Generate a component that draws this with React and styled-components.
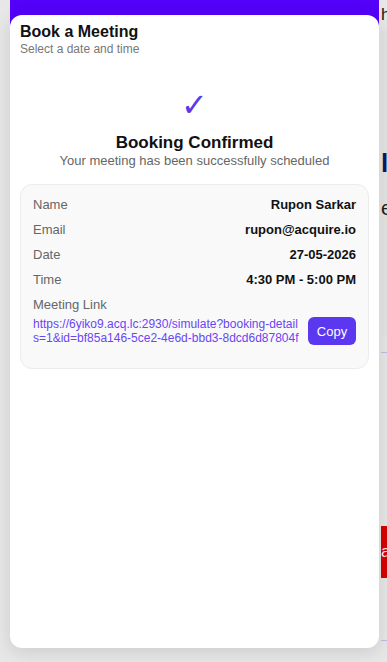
import styled, { createGlobalStyle } from 'styled-components';

const GlobalStyle = createGlobalStyle`
  html, body {
    margin: 0;
    padding: 0;
    background: #ffffff;
    font-family: "Liberation Sans", Arial, sans-serif;
  }
`;

const Page = styled.div`
  width: 387px;
  height: 662px;
  overflow: hidden;
  position: relative;
  background: #fafafa;
`;

const PageContent = styled.div`
  display: flex;
  flex-direction: column;
  padding-left: 381px;
  white-space: nowrap;
`;

const PageTop = styled.div`
  height: 30px;
  display: flex;
  align-items: center;
  font-size: 17px;
  color: #222;
`;

const PageHero = styled.div`
  height: 306px;
  background: #f7f7f7;
  display: flex;
  flex-direction: column;
  padding-top: 118px;
  box-sizing: border-box;
  gap: 18px;
`;

const HeroTitle = styled.div`
  font-size: 26px;
  font-weight: 700;
  color: #0d1b6b;
`;

const HeroText = styled.div`
  font-size: 20px;
  color: #222;
`;

const Divider = styled.div`
  height: 1px;
  background: #cfc8f5;
  margin-top: 16px;
`;

const RedButton = styled.div`
  margin-top: 173px;
  height: 52px;
  background: #e80000;
  color: #fff;
  font-size: 17px;
  display: flex;
  align-items: center;
`;

const BottomLine = styled.div`
  height: 1px;
  background: #cfc8f5;
  margin-top: 62px;
`;

const Overlay = styled.div`
  position: absolute;
  inset: 0;
  background: rgba(0, 0, 0, 0.075);
`;

const Sheet = styled.div`
  margin-left: 10px;
  width: 369px;
  height: 648px;
  padding-top: 15px;
  box-sizing: border-box;
  background: linear-gradient(#5400f9 0, #5400f9 30px, transparent 30px);
`;

const Modal = styled.div`
  height: 100%;
  background: #fff;
  border-radius: 12px;
  box-shadow: 0 4px 18px rgba(0, 0, 0, 0.12);
  display: flex;
  flex-direction: column;
  padding: 7px 10px 0;
  box-sizing: border-box;
`;

const Title = styled.h2`
  margin: 0;
  font-size: 16px;
  font-weight: 700;
  color: #111;
  line-height: 20px;
`;

const Subtitle = styled.p`
  margin: 0;
  font-size: 12px;
  color: #777;
  line-height: 14px;
`;

const Confirm = styled.div`
  display: flex;
  flex-direction: column;
  align-items: center;
  margin-top: 31px;
`;

const Check = styled.div`
  font-size: 32px;
  line-height: 36px;
  color: #5b37f0;
`;

const ConfirmTitle = styled.div`
  margin-top: 10px;
  font-size: 17px;
  font-weight: 700;
  color: #111;
  line-height: 20px;
`;

const ConfirmText = styled.div`
  font-size: 13px;
  color: #666;
  line-height: 16px;
`;

const Details = styled.div`
  margin-top: 15px;
  background: #f9f9fa;
  border: 1px solid #ececee;
  border-radius: 12px;
  padding: 7px 12px 23px 12px;
  display: flex;
  flex-direction: column;
`;

const Row = styled.div`
  display: flex;
  justify-content: space-between;
  align-items: center;
  height: 25px;
  font-size: 13px;
`;

const Label = styled.span`
  color: #666;
`;

const Value = styled.span`
  color: #111;
  font-weight: 700;
`;

const LinkLabel = styled.div`
  margin-top: 5px;
  font-size: 13px;
  color: #666;
  line-height: 16px;
`;

const LinkRow = styled.div`
  margin-top: 4px;
  display: flex;
  align-items: center;
  gap: 8px;
`;

const LinkText = styled.a`
  flex: 1;
  font-size: 12px;
  line-height: 14px;
  color: #6a45f5;
  text-decoration: none;
  word-break: break-all;
`;

const CopyButton = styled.button`
  flex-shrink: 0;
  width: 48px;
  height: 28px;
  border: none;
  border-radius: 6px;
  background: #5b37f0;
  color: #fff;
  font-family: inherit;
  font-size: 13px;
  cursor: pointer;
`;

const details = [
  ['Name', 'Rupon Sarkar'],
  ['Email', 'rupon@acquire.io'],
  ['Date', '27-05-2026'],
  ['Time', '4:30 PM - 5:00 PM'],
];

const link =
  'https://6yiko9.acq.lc:2930/simulate?booking-details=1&id=bf85a146-5ce2-4e6d-bbd3-8dcd6d87804f';

const App = () => {
  return (
    <>
      <GlobalStyle />
      <Page>
        <PageContent>
          <PageTop>h</PageTop>
          <PageHero>
            <HeroTitle>li</HeroTitle>
            <HeroText>e</HeroText>
          </PageHero>
          <Divider />
          <RedButton>a</RedButton>
          <BottomLine />
        </PageContent>
        <Overlay>
          <Sheet>
            <Modal>
              <Title>Book a Meeting</Title>
              <Subtitle>Select a date and time</Subtitle>
              <Confirm>
                <Check>✓</Check>
                <ConfirmTitle>Booking Confirmed</ConfirmTitle>
                <ConfirmText>Your meeting has been successfully scheduled</ConfirmText>
              </Confirm>
              <Details>
                {details.map(([label, value]) => (
                  <Row key={label}>
                    <Label>{label}</Label>
                    <Value>{value}</Value>
                  </Row>
                ))}
                <LinkLabel>Meeting Link</LinkLabel>
                <LinkRow>
                  <LinkText href="#">{link}</LinkText>
                  <CopyButton>Copy</CopyButton>
                </LinkRow>
              </Details>
            </Modal>
          </Sheet>
        </Overlay>
      </Page>
    </>
  );
};

export default App;
